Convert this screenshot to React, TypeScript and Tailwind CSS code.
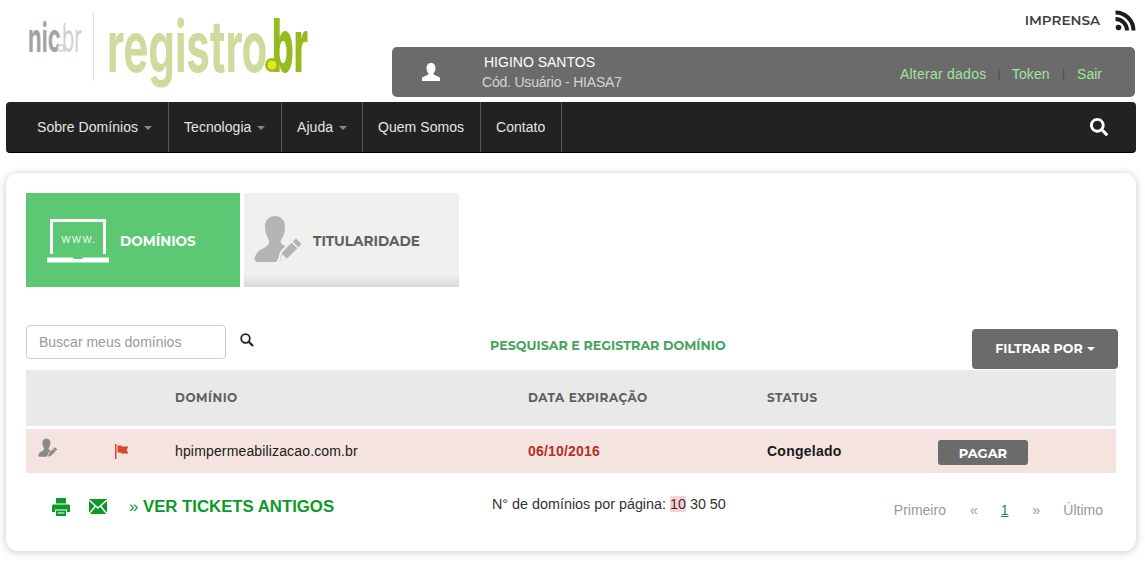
import React from "react";
import { FaSearch } from "react-icons/fa";

const heading = { fontFamily: "Montserrat, Inter, sans-serif" };

const Caret = ({ className = "" }: { className?: string }) => (
  <span className={`inline-block w-0 h-0 border-x-[4px] border-x-transparent border-t-[4px] ${className}`} />
);

const Logo = () => (
  <div className="w-[392px] shrink-0 pl-[20px]">
    <svg width="300" height="100" viewBox="0 0 300 100" className="block" fontFamily="Inter, sans-serif">
      <text transform="translate(8 52) scale(0.55 1)" fontSize="40" fontWeight="700" fill="#a3a3a5">nic</text>
      <text transform="translate(42 52) scale(0.5 1)" fontSize="40" fontWeight="400" fill="#cfd1d4">br</text>
      <circle cx="41" cy="48" r="3" fill="#fff" stroke="#cfd1d4" strokeWidth="1.500" />
      <line x1="73.500" y1="13" x2="73.500" y2="81" stroke="#dcdcdc" />
      <text transform="translate(87 72) scale(0.57 0.96)" fontSize="74" fontWeight="700" fill="#cddc9c">registro</text>
      <text transform="translate(252 72) scale(0.46 1)" fontSize="74" fontWeight="800" fill="#95bb1f">br</text>
      <circle cx="252" cy="65" r="7" fill="#95bb1f" />
      <circle cx="252" cy="65" r="4.500" fill="#e4e81c" />
    </svg>
  </div>
);

const UserPanel = () => (
  <div className="h-[50px] w-[743px] rounded-[5px] bg-[#6b6b6b] flex items-center text-[14px]">
    <div className="w-[78px] mr-[12px] flex justify-center">
      <svg width="18" height="18" viewBox="0 0 18 18" fill="#fff">
        <path d="M9 0c3 0 4.500 2.300 4.500 5 0 2.200-.8 4-1.800 5.200-.4.6-.2 1.200.4 1.500l4.900 2.300c.6.3 1 .8 1 1.500V18H0v-2.500c0-.7.4-1.200 1-1.500l4.900-2.300c.6-.3.8-.9.4-1.500C5.300 9 4.500 7.200 4.500 5 4.500 2.300 6 0 9 0z" />
      </svg>
    </div>
    <div className="flex flex-col leading-[20px] -mt-[1px]">
      <span className="text-white pl-[2px]">HIGINO SANTOS</span>
      <span className="text-[#d5d5d5] tracking-[-0.2px]">Cód. Usuário - HIASA7</span>
    </div>
    <div className="ml-auto mr-[33px] mt-[4px] flex items-center text-[#a3e39c]">
      <span className="tracking-[0.25px]">Alterar dados</span>
      <span className="mx-[11px] text-[#4f4f4f] text-[13px]">|</span>
      <span className="tracking-[0.1px]">Token</span>
      <span className="ml-[12px] mr-[12px] text-[#4f4f4f] text-[13px]">|</span>
      <span>Sair</span>
    </div>
  </div>
);

const RssIcon = () => (
  <svg width="21" height="21" viewBox="0 0 21 21" fill="none" stroke="#1c1c1c" strokeWidth="4">
    <circle cx="3.500" cy="17.500" r="2.800" fill="#1c1c1c" stroke="none" />
    <path d="M0.500 9A11.500 11.500 0 0 1 12 20.500" />
    <path d="M0.500 2.500A18 18 0 0 1 18.500 20.500" />
  </svg>
);

const Header = () => (
  <header className="flex h-[102px]">
    <Logo />
    <div className="flex flex-col w-[743px]">
      <div className="h-[47px] flex justify-end items-start pt-[10px] -mr-[1px]">
        <span className="text-[13.5px] font-semibold text-[#3f3f3f] mr-[15px]" style={heading}>IMPRENSA</span>
        <RssIcon />
      </div>
      <UserPanel />
    </div>
  </header>
);

const navItems = [
  { label: "Sobre Domínios", caret: true, width: "w-[163px] pl-[31px]" },
  { label: "Tecnologia", caret: true, width: "w-[113px] pl-[15px]" },
  { label: "Ajuda", caret: true, width: "w-[81px] pl-[15px]" },
  { label: "Quem Somos", caret: false, width: "w-[118px] pl-[15px]" },
  { label: "Contato", caret: false, width: "w-[81px] pl-[15px]" },
];

const Nav = () => (
  <nav className="ml-[6px] w-[1130px] h-[51px] bg-[#222222] rounded-[4px] border-b border-black flex items-stretch text-[14px] tracking-[0.05px] text-[#e5e5e5]">
    {navItems.map((item) => (
      <div key={item.label} className={`${item.width} flex items-center gap-[5px] border-r border-[#555]`}>
        <span>{item.label}</span>
        {item.caret && <Caret className="border-t-[#888] mt-[2px] ml-[1px]" />}
      </div>
    ))}
    <div className="ml-auto flex items-center pr-[28px]">
      <FaSearch className="text-white w-[18px] h-[18px]" />
    </div>
  </nav>
);

const LaptopIcon = () => (
  <svg width="62" height="46" viewBox="0 0 62 46" className="shrink-0 mt-[3px]">
    <path d="M3 0h56v35h-3V3H6v32H3z" fill="#fff" />
    <path d="M0 38.500h25c1 0 1.500 1.500 3 1.500h6c1.500 0 2-1.500 3-1.500h25V42c0 1-.5 1.500-1.500 1.500h-59C.5 43.500 0 43 0 42z" fill="#fff" />
    <text x="14" y="24" fontFamily="Inter, sans-serif" fontSize="12" fontWeight="300" letterSpacing="0.8" fill="#fff">www.</text>
  </svg>
);

const PersonPen = ({ size, fill, gap, tip }: { size: number; fill: string; gap: string; tip: string }) => (
  <svg width={size} height={size} viewBox="0 0 50 50" className="shrink-0">
    <path d="M21 1C27 1 31 5 31 12C31 18 29 22 27 25C26 27 27 29 29 30L33 32L22 47H4C1 47 0 45 1 42C2 38 5 35 10 33C14 31 16 28 15 25C13 22 11 17 11 12C11 5 15 1 21 1Z" fill={fill} />
    <path d="M24 48L27 37L42 22L49 29L34 44Z" fill={fill} stroke={gap} strokeWidth="2" strokeLinejoin="round" />
    <path d="M37.500 26.500L44.500 33.500" stroke={gap} strokeWidth="1.500" />
    <path d="M26 46L28 39L32.500 43.500Z" fill={tip} />
  </svg>
);

const Tabs = () => (
  <div className="flex gap-[4px]">
    <div className="w-[214px] h-[94px] bg-[#5cc873] flex items-center pl-[21px] gap-[11px]">
      <LaptopIcon />
      <span className="text-[13.6px] font-bold text-white mt-[2px]" style={heading}>DOMÍNIOS</span>
    </div>
    <div className="w-[215px] h-[94px] bg-[linear-gradient(to_bottom,#f0f0ee_0,#f0f0ee_86%,#d9d9d7_100%)] flex items-center pl-[10px] gap-[9px]">
      <PersonPen size={50} fill="#b4b4b4" gap="#f0f0ee" tip="#f0f0ee" />
      <span className="text-[13.6px] font-bold text-[#5f5f5f] mt-[2px]" style={heading}>TITULARIDADE</span>
    </div>
  </div>
);

const SearchBar = () => (
  <div className="h-[83px] flex items-start pt-[38px]">
    <div className="w-[200px] h-[34px] rounded-[4px] border border-[#ccc] flex items-center pl-[12px] text-[14px] text-[#999]">
      Buscar meus domínios
    </div>
    <svg width="14" height="14" viewBox="0 0 14 14" fill="none" stroke="#222" className="ml-[14px] mt-[8px] shrink-0">
      <circle cx="5.500" cy="5.500" r="4.300" strokeWidth="1.800" />
      <path d="M8.700 8.700L13 13" strokeWidth="2.200" />
    </svg>
    <span className="ml-[236px] mt-[11px] text-[12.7px] font-bold text-[#45a35f] whitespace-nowrap" style={heading}>PESQUISAR E REGISTRAR DOMÍNIO</span>
    <div className="ml-auto mt-[4px] mr-[-2px] w-[146px] h-[40px] rounded-[4px] bg-[#6b6b6b] text-white flex items-center justify-center gap-[4px] text-[12.6px] font-bold" style={heading}>
      FILTRAR POR
      <Caret className="border-t-white" />
    </div>
  </div>
);

const TableGrid = "grid grid-cols-[149px_353px_239px_171px_1fr] items-center";

const FlagIcon = () => (
  <svg width="14" height="15" viewBox="0 0 14 15" className="shrink-0">
    <rect x="0" y="0" width="1.500" height="15" fill="#d9472f" />
    <path d="M2.500 1.500H6L7 2.500H13.500L11.500 6L13.500 9.500H6.500L5.500 8.500H2.500Z" fill="#d9472f" />
  </svg>
);

const DomainTable = () => (
  <div className="w-[1090px] text-[14px]">
    <div className={`${TableGrid} h-[56px] bg-[#e9e9e9] text-[12px] font-bold text-[#5f5f5f] tracking-[0.5px]`} style={heading}>
      <span />
      <span>DOMÍNIO</span>
      <span>DATA EXPIRAÇÃO</span>
      <span>STATUS</span>
      <span />
    </div>
    <div className={`${TableGrid} h-[44px] mt-[3px] bg-[#f4e3df] text-[#1a1a1a]`}>
      <div className="flex items-center pl-[12px]">
        <div className="w-[77px] -mt-[7px]">
          <PersonPen size={20} fill="#8a8a8a" gap="#f4e3df" tip="#8a8a8a" />
        </div>
        <FlagIcon />
      </div>
      <span className="tracking-[0.15px]">hpimpermeabilizacao.com.br</span>
      <span className="font-bold text-[#b5302a] tracking-[0.2px]">06/10/2016</span>
      <span className="font-bold tracking-[0.25px]">Congelado</span>
      <div className="pt-[3px]">
        <div className="w-[90px] h-[25px] rounded-[3px] bg-[#6b6b6b] text-white text-[13px] font-bold flex items-center justify-center pt-[3px]" style={heading}>PAGAR</div>
      </div>
    </div>
  </div>
);

const PrintIcon = () => (
  <svg width="18" height="18" viewBox="0 0 18 18" fill="#0b9a26" className="shrink-0">
    <path d="M4 0h10v5.500H4z" />
    <path d="M1.500 6.500h15c1 0 1.500.5 1.500 1.500v6h-3v-2.500H3V14H0V8c0-1 .5-1.500 1.500-1.500z" />
    <path d="M4 12.500h10V18H4z" />
    <path d="M5.500 15h7" stroke="#fff" strokeWidth="1" />
  </svg>
);

const MailIcon = () => (
  <svg width="18" height="15" viewBox="0 0 18 15" className="block">
    <rect width="18" height="15" fill="#0b9a26" />
    <path d="M0 1L9 9L18 1" fill="none" stroke="#fff" strokeWidth="1.500" />
    <path d="M0 15L6.500 7M18 15L11.500 7" fill="none" stroke="#fff" strokeWidth="1.500" />
  </svg>
);

const Footer = () => (
  <div className="flex items-start h-[78px] text-[14px]">
    <div className="w-[466px] flex items-center pl-[26px] pt-[21px] text-[#0b9a26]">
      <PrintIcon />
      <span className="ml-[19px]"><MailIcon /></span>
      <span className="ml-[22px] text-[16.75px] font-bold whitespace-nowrap">
        <span className="font-normal">»</span> VER TICKETS ANTIGOS
      </span>
    </div>
    <div className="pt-[21px] text-[14.35px] text-[#333] whitespace-nowrap">
      N° de domínios por página: <span className="bg-[#fbd0d0]">10</span> 30 50
    </div>
    <div className="ml-auto mr-[13px] pt-[27px] flex text-[#999] whitespace-nowrap">
      <span>Primeiro</span>
      <span className="ml-[24px]">«</span>
      <span className="ml-[23px] text-[#2e8b3d] underline">1</span>
      <span className="ml-[24px]">»</span>
      <span className="ml-[23px]">Último</span>
    </div>
  </div>
);

export default function App() {
  return (
    <div className="w-[1145px] h-[563px] overflow-hidden bg-white font-['Liberation_Sans',sans-serif]">
      <Header />
      <Nav />
      <main className="ml-[6px] mt-[20px] w-[1130px] h-[378px] rounded-[12px] bg-white shadow-[0_1px_8px_rgba(0,0,0,0.22)] pt-[20px] px-[20px]">
        <Tabs />
        <SearchBar />
        <DomainTable />
        <Footer />
      </main>
    </div>
  );
}
